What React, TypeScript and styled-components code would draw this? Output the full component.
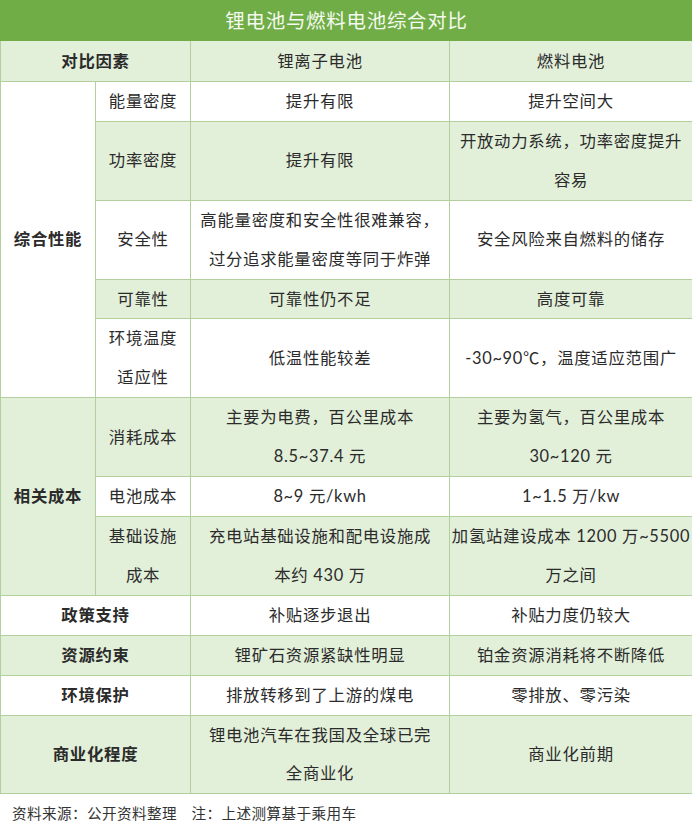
import styled, { createGlobalStyle } from 'styled-components';

const GlobalStyle = createGlobalStyle`
  body {
    margin: 0;
    background: #ffffff;
    font-family: Lato, "Noto Sans CJK SC", sans-serif;
    color: #2b2b2b;
  }
`;

type Row = {
  sub?: string[];
  label?: string[];
  li: string[];
  fuel: string[];
};

const perf: Row[] = [
  { sub: ['能量密度'], li: ['提升有限'], fuel: ['提升空间大'] },
  { sub: ['功率密度'], li: ['提升有限'], fuel: ['开放动力系统，功率密度提升', '容易'] },
  {
    sub: ['安全性'],
    li: ['高能量密度和安全性很难兼容，', '过分追求能量密度等同于炸弹'],
    fuel: ['安全风险来自燃料的储存'],
  },
  { sub: ['可靠性'], li: ['可靠性仍不足'], fuel: ['高度可靠'] },
  { sub: ['环境温度', '适应性'], li: ['低温性能较差'], fuel: ['-30~90℃，温度适应范围广'] },
];

const cost: Row[] = [
  { sub: ['消耗成本'], li: ['主要为电费，百公里成本', '8.5~37.4 元'], fuel: ['主要为氢气，百公里成本', '30~120 元'] },
  { sub: ['电池成本'], li: ['8~9 元/kwh'], fuel: ['1~1.5 万/kw'] },
  {
    sub: ['基础设施', '成本'],
    li: ['充电站基础设施和配电设施成', '本约 430 万'],
    fuel: ['加氢站建设成本 1200 万~5500', '万之间'],
  },
];

const others: Row[] = [
  { label: ['政策支持'], li: ['补贴逐步退出'], fuel: ['补贴力度仍较大'] },
  { label: ['资源约束'], li: ['锂矿石资源紧缺性明显'], fuel: ['铂金资源消耗将不断降低'] },
  { label: ['环境保护'], li: ['排放转移到了上游的煤电'], fuel: ['零排放、零污染'] },
  { label: ['商业化程度'], li: ['锂电池汽车在我国及全球已完', '全商业化'], fuel: ['商业化前期'] },
];

const Lines = ({ lines }: { lines: string[] }) => (
  <>
    {lines.map((line, i) => (
      <span key={i}>
        {i > 0 && <br />}
        {line}
      </span>
    ))}
  </>
);

const App = () => {
  let index = 0;
  const shade = () => index++ % 2 === 1;

  const groupRows = (title: string, rows: Row[]) => {
    const firstShade = index % 2 === 1;
    return rows.map((row, i) => {
      const $green = shade();
      return (
        <tr key={title + i}>
          {i === 0 && (
            <GroupCell rowSpan={rows.length} $green={firstShade}>
              {title}
            </GroupCell>
          )}
          <Cell $green={$green}>
            <Lines lines={row.sub ?? []} />
          </Cell>
          <Cell $green={$green}>
            <Lines lines={row.li} />
          </Cell>
          <Cell $green={$green}>
            <Lines lines={row.fuel} />
          </Cell>
        </tr>
      );
    });
  };

  return (
    <Page>
      <GlobalStyle />
      <Table>
        <colgroup>
          <col style={{ width: 95 }} />
          <col style={{ width: 95 }} />
          <col style={{ width: 259 }} />
          <col style={{ width: 243 }} />
        </colgroup>
        <thead>
          <tr>
            <TitleCell colSpan={4}>锂电池与燃料电池综合对比</TitleCell>
          </tr>
          <tr>
            <HeadCell colSpan={2} $bold>
              对比因素
            </HeadCell>
            <HeadCell>锂离子电池</HeadCell>
            <HeadCell>燃料电池</HeadCell>
          </tr>
        </thead>
        <tbody>
          {groupRows('综合性能', perf)}
          {groupRows('相关成本', cost)}
          {others.map((row) => {
            const $green = shade();
            return (
              <tr key={row.label?.[0]}>
                <GroupCell colSpan={2} $green={$green}>
                  <Lines lines={row.label ?? []} />
                </GroupCell>
                <Cell $green={$green}>
                  <Lines lines={row.li} />
                </Cell>
                <Cell $green={$green}>
                  <Lines lines={row.fuel} />
                </Cell>
              </tr>
            );
          })}
        </tbody>
      </Table>
      <Source>资料来源：公开资料整理&nbsp;&nbsp;&nbsp;&nbsp;注：上述测算基于乘用车</Source>
    </Page>
  );
};
export default App;

const Page = styled.div`
  width: 692px;
`;

const Table = styled.table`
  width: 692px;
  border-collapse: collapse;
  table-layout: fixed;
  font-size: 16.4px;
  letter-spacing: 0.7px;
`;

const BaseCell = styled.td`
  border: 1px solid #b4cf9e;
  padding: 0;
  text-align: center;
  vertical-align: middle;
  line-height: 38.9px;
  white-space: nowrap;
`;

const TitleCell = styled(BaseCell).attrs({ as: 'th' })`
  background: #70ad47;
  color: #f4faef;
  font-size: 19.5px;
  font-weight: 400;
  line-height: 39px;
  border-color: #70ad47;
`;

const HeadCell = styled(BaseCell).attrs({ as: 'th' })<{ $bold?: boolean }>`
  background: #e2efd9;
  font-weight: ${(props) => (props.$bold ? 700 : 400)};
  line-height: 40px;
`;

const Cell = styled(BaseCell)<{ $green?: boolean }>`
  background: ${(props) => (props.$green ? '#e2efd9' : '#ffffff')};
`;

const GroupCell = styled(Cell)`
  font-weight: 700;
`;

const Source = styled.div`
  padding: 9px 0 0 12px;
  font-size: 14.6px;
  letter-spacing: 0.4px;
  line-height: 20px;
  color: #333333;
  font-family: "Noto Sans CJK SC", sans-serif;
`;
